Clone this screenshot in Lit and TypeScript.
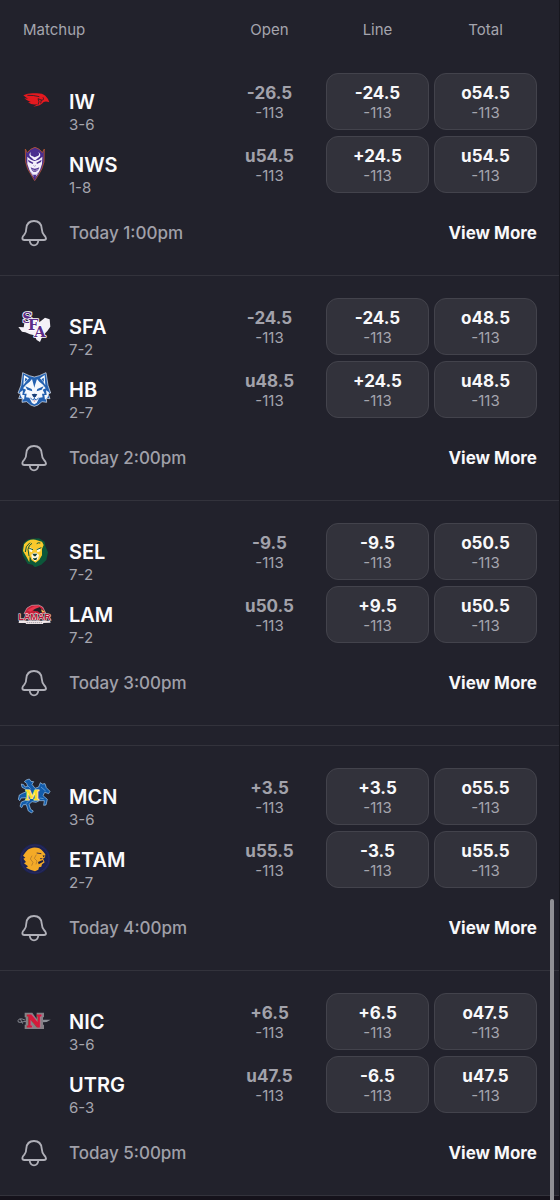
import { LitElement, html, svg, css, type TemplateResult } from "lit";
import { customElement, property } from "lit/decorators.js";

interface Quote {
  value: string;
  price: string;
}

interface Team {
  code: string;
  record: string;
  open: Quote;
  line: Quote;
  total: Quote;
}

interface Game {
  time: string;
  teams: Team[];
}

const team = (code: string, record: string, open: string, line: string, total: string): Team => ({
  code,
  record,
  open: { value: open, price: "-113" },
  line: { value: line, price: "-113" },
  total: { value: total, price: "-113" },
});

const SECTIONS: Game[][] = [
  [
    {
      time: "Today 1:00pm",
      teams: [
        team("IW", "3-6", "-26.5", "-24.5", "o54.5"),
        team("NWS", "1-8", "u54.5", "+24.5", "u54.5"),
      ],
    },
    {
      time: "Today 2:00pm",
      teams: [
        team("SFA", "7-2", "-24.5", "-24.5", "o48.5"),
        team("HB", "2-7", "u48.5", "+24.5", "u48.5"),
      ],
    },
    {
      time: "Today 3:00pm",
      teams: [
        team("SEL", "7-2", "-9.5", "-9.5", "o50.5"),
        team("LAM", "7-2", "u50.5", "+9.5", "u50.5"),
      ],
    },
  ],
  [
    {
      time: "Today 4:00pm",
      teams: [
        team("MCN", "3-6", "+3.5", "+3.5", "o55.5"),
        team("ETAM", "2-7", "u55.5", "-3.5", "u55.5"),
      ],
    },
    {
      time: "Today 5:00pm",
      teams: [
        team("NIC", "3-6", "+6.5", "+6.5", "o47.5"),
        team("UTRG", "6-3", "u47.5", "-6.5", "u47.5"),
      ],
    },
  ],
];

const LOGOS: Record<string, { box: string; art: TemplateResult }> = {
  // Cardinal head
  IW: {
    box: "18 9 108 108",
    art: svg`
      <path fill="#e5191f" d="M40 46 Q54 39 72 40 Q96 38 106 47 Q114 54 118 67 Q108 62 101 66 Q92 78 70 80 Q80 76 82 72 Q68 77 54 67 L62 66 Q50 62 43 55 L54 56 Q46 52 40 46Z"/>
      <path fill="none" stroke="#22222c" stroke-width="2.5" d="M52 46 Q70 45 88 50 M84 74 Q90 66 84 56 L94 60 Q104 61 99 52 M94 60 L92 70"/>`,
  },
  // Demon face
  NWS: {
    box: "18 198 108 108",
    art: svg`
      <path fill="#4a2d8f" stroke="#b4552f" stroke-width="2.5" d="M46 207 L52 218 Q60 206 75 202 Q90 206 97 218 L103 207 L102 246 Q97 268 87 282 L74 302 L62 282 Q51 268 47 246Z"/>
      <path fill="#f3effa" d="M52 230 L63 239 L73 243 L86 239 L97 230 L96 252 Q91 272 82 284 L74 294 L66 284 Q57 270 52 252Z"/>
      <path fill="#f3effa" d="M63 216 Q52 226 65 233 L72 240 L77 240 L85 233 Q97 226 85 216 Q91 226 81 229 L74 232 L68 229 Q58 226 63 216Z"/>
      <path fill="#4a2d8f" d="M54 239 L70 248 L68 252 L56 246Z M95 239 L79 248 L81 252 L93 246Z M62 262 Q74 270 88 262 Q85 273 78 275 L70 275 Q64 272 62 262Z M69 284 L79 284 L74 302Z"/>
      <path fill="none" stroke="#e9e4f4" stroke-width="3" stroke-dasharray="3 1.5" d="M65 268 Q74 274 84 268"/>
      <path fill="none" stroke="#9382bd" stroke-width="2" d="M70 256 L74 259 L78 256 M62 276 L69 286 M86 276 L79 286"/>`,
  },
  // Letters over a state outline
  SFA: {
    box: "18 9 108 108",
    art: svg`
      <path fill="#f4f2f7" d="M43 55 L55 55 L57 44 L78 46 L84 42 L88 52 L105 38 L119 43 L121 65 L112 78 L98 92 L90 111 L80 105 L73 91 L60 88 L46 82 L36 80 L25 66 L41 67Z"/>
      <text font-family="DejaVu Serif, serif" font-weight="700" font-size="44" fill="#5b2c88" stroke="#fff" stroke-width="5" stroke-linejoin="round" paint-order="stroke"><tspan x="37" y="54">S</tspan><tspan x="54" y="76">F</tspan><tspan x="73" y="95">A</tspan></text>`,
  },
  // Husky face
  HB: {
    box: "18 198 108 108",
    art: svg`
      <path fill="#2361b0" stroke="#e8f0fa" stroke-width="2" stroke-linejoin="round" d="M38 203 L58 212 L73 216 L88 212 L108 203 L114 241 L122 264 L114 266 L120 281 L109 280 L110 292 L96 290 L84 300 L73 304 L62 300 L50 290 L36 292 L37 280 L26 281 L32 266 L24 264 L33 241Z"/>
      <path fill="#f4f8fd" d="M42 210 L57 220 L47 231 L40 241Z M104 210 L90 220 L100 231 L106 241Z M66 222 L71 240 L73 248 L75 240 L81 222 L88 230 L99 239 L107 250 L98 254 L104 266 L96 266 L98 277 L88 278 L80 294 L73 298 L66 294 L58 278 L48 277 L50 266 L42 266 L48 254 L39 250 L48 239 L59 230Z"/>
      <path fill="#2361b0" d="M46 218 L53 223 L44 231Z M101 218 L94 223 L102 231Z M46 244 L65 252 L67 259 L52 254Z M101 244 L82 252 L80 259 L95 254Z"/>
      <path fill="#f4f8fd" d="M30 262 L39 256 L37 270 L44 270 L42 284 L34 277Z M117 262 L108 256 L110 270 L103 270 L105 284 L113 277Z"/>
      <path fill="#173e76" d="M65 268 Q74 264 82 268 L77 276 L70 276Z"/>
      <path fill="none" stroke="#2361b0" stroke-width="3" d="M73 276 L73 282 M61 279 Q68 288 73 282 Q79 288 86 279"/>
      <path fill="#d9a3ad" d="M69 286 L78 286 L73 292Z"/>`,
  },
  // Lion with a green mane
  SEL: {
    box: "18 9 108 108",
    art: svg`
      <path fill="#0c573a" d="M41 39 L52 29 L65 26 L87 25 L104 35 L106 48 L114 67 L109 90 L94 104 L75 112 L67 104 L53 101 L46 90 L38 76 L36 60Z"/>
      <path fill="#fac92c" d="M42 43 Q55 26 76 29 L96 35 L101 45 L96 57 L96 76 L88 89 L77 98 L65 91 L59 77 L58 97 L50 82 L46 75 L39 63Z"/>
      <path fill="#fff8dc" d="M60 52 L68 57 L66 67 L58 64Z M80 57 L91 53 L91 64 L82 67Z M64 74 L71 68 L80 68 L87 75 L84 88 L75 94 L66 86Z"/>
      <path fill="none" stroke="#0c573a" stroke-width="3" d="M60 38 L49 50 L46 66 M66 40 Q56 45 54 58 L57 78 M58 55 L69 59 M80 59 L94 53 M91 39 Q84 37 80 41"/>
      <path fill="#123e32" d="M67 71 L82 71 L77 79 L72 79Z M68 83 Q75 87 82 82 L79 90 L72 90Z"/>`,
  },
  // Cardinal over the school name
  LAM: {
    box: "18 198 108 108",
    art: svg`
      <path fill="#c81f39" stroke="#eedde2" stroke-width="1.5" d="M42 251 L51 234 L65 226 L86 225 L98 231 L107 249 L89 254 L76 249 L66 255Z"/>
      <path fill="#222027" d="M64 238 L88 231 L101 242 L92 251 L83 244 L73 243Z"/>
      <path fill="#e7364d" d="M51 241 L73 229 L94 229 L76 236 L61 245Z"/>
      <path fill="#f2c45b" d="M93 238 L107 247 L96 247Z"/>
      <text x="25" y="271" font-family="Liberation Sans, sans-serif" font-weight="700" font-size="27" fill="#b91533" stroke="#f2e7ea" stroke-width="3" paint-order="stroke">LAMAR</text>
      <path fill="#f1e8ea" d="M27 272 L120 272 L122 278 L100 279 L99 282 L48 282 L47 279 L26 279Z"/>
      <path stroke="#7d7881" stroke-width="2" stroke-dasharray="4 2" d="M50 278 H98"/>`,
  },
  // Cowboy on a horse behind an M
  MCN: {
    box: "18 24 108 108",
    art: svg`
      <path fill="#125cab" stroke="#a8cbed" stroke-width="2" stroke-linejoin="round" d="M49 30 L58 27 L63 34 L71 35 L66 43 L75 55 L86 51 L91 38 L97 42 L105 41 L109 53 L120 64 L116 71 L104 67 L99 77 L112 88 L108 105 L101 106 L103 92 L88 92 L78 97 L66 95 L57 103 L62 118 L70 123 L65 129 L55 123 L49 104 L40 104 L35 113 L30 109 L34 96 L47 91 L49 83 L33 84 L29 92 L25 88 L28 75 L39 69 L48 66 L48 58 L36 52 L34 42 L41 44 L45 51 L53 49 L50 40 L43 35Z"/>
      <path fill="none" stroke="#79b2e4" stroke-width="2" d="M54 48 L62 56 M93 51 L107 63 M89 84 L101 86 M55 94 L48 101"/>
      <text x="46" y="91" font-family="DejaVu Serif, serif" font-weight="700" font-size="38" fill="#ffdc28" stroke="#fff2a0" stroke-width="3" paint-order="stroke">M</text>`,
  },
  // Lion profile on a navy disc
  ETAM: {
    box: "18 213 108 108",
    art: svg`
      <circle cx="75" cy="267" r="46" fill="#1c2254"/>
      <circle cx="75" cy="267" r="42" fill="none" stroke="#30315e" stroke-width="2"/>
      <path fill="#f4aa27" d="M45 249 Q52 236 68 233 Q88 231 98 243 L106 253 L105 262 L99 266 L104 277 L96 283 L94 290 L87 292 L85 299 L75 304 L61 299 L48 293 L54 289 L42 280 L48 276 L40 266 L46 263 L39 257Z"/>
      <path fill="none" stroke="#a8702c" stroke-width="2" d="M79 254 L73 265 L81 273 L78 283 M66 257 L61 267 L69 277 L65 287"/>
      <path fill="none" stroke="#4b3540" stroke-width="3" d="M80 249 L94 251 M90 266 L97 266"/>
      <path fill="#202141" d="M98 256 L106 257 L100 262Z M84 276 L98 270 L100 275 L86 283Z"/>`,
  },
  // N crossed by a sword
  NIC: {
    box: "18 9 108 108",
    art: svg`
      <path fill="none" stroke="#858890" stroke-width="3" d="M45 60 Q27 52 24 62 Q23 68 30 67 L48 64 M31 57 L38 71"/>
      <path fill="#8d9097" d="M96 59 L122 59 Q111 68 96 67Z"/>
      <path fill="#858187" d="M44 38 H67 L80 57 V38 H102 V52 H99 V74 H102 V87 H44 V74 H47 V52 H44Z"/>
      <text x="50" y="80" font-family="DejaVu Serif, serif" font-weight="700" font-size="49" fill="#d5193a" stroke="#d5193a" stroke-width="3">N</text>`,
  },
};

const BASE = css`
  *,
  *::before,
  *::after {
    box-sizing: border-box;
  }
  button {
    margin: 0;
    padding: 0;
    border: 0;
    background: none;
    font: inherit;
    color: inherit;
    cursor: pointer;
  }
`;

@customElement("team-logo")
class TeamLogo extends LitElement {
  @property() code = "";

  static styles = css`
    :host {
      display: block;
      width: 36px;
      height: 36px;
    }
    .art {
      display: block;
      width: 100%;
      height: 100%;
    }
  `;

  render() {
    const logo = LOGOS[this.code];
    return logo
      ? html`<svg class="art" viewBox=${logo.box} aria-hidden="true">${logo.art}</svg>`
      : null;
  }
}

@customElement("game-card")
class GameCard extends LitElement {
  @property({ attribute: false }) game!: Game;

  static styles = [
    BASE,
    css`
      :host {
        display: block;
        padding: 22px 22px 0 16px;
        border-bottom: 1px solid #33333c;
      }
      .odds {
        display: grid;
        grid-template-columns: minmax(0, 1fr) repeat(3, 103px);
        column-gap: 5px;
        align-items: start;
      }
      .team {
        display: grid;
        grid-template-columns: 36px 1fr;
        column-gap: 17px;
      }
      .logo {
        margin-top: 10px;
      }
      .name {
        padding-top: 17px;
      }
      .code {
        font-size: 20px;
        font-weight: 600;
        line-height: 24px;
        color: #fbfbfd;
      }
      .record {
        font-size: 15px;
        line-height: 22px;
        color: #a5a5ae;
      }
      .column {
        display: grid;
        row-gap: 6px;
      }
      .quote {
        display: block;
        width: 100%;
        padding: 9px 0 6px;
        border: 1px solid transparent;
        border-radius: 12px;
        text-align: center;
        color: #a2a2ab;
      }
      .pick {
        background: #32323b;
        border-color: #43434c;
      }
      .value {
        display: block;
        font-size: 17px;
        font-weight: 700;
        line-height: 20px;
      }
      .pick .value {
        color: #f8f8fa;
      }
      .price {
        display: block;
        font-size: 15px;
        line-height: 20px;
        color: #a5a5ae;
      }
      .footer {
        display: grid;
        grid-template-columns: 36px 1fr auto;
        column-gap: 17px;
        align-items: center;
        padding-bottom: 8px;
        font-size: 17px;
        font-weight: 500;
        line-height: 68px;
        color: #a0a0a9;
      }
      .alert {
        display: grid;
        place-items: center;
      }
      .bell {
        display: block;
        width: 28px;
        height: 28px;
      }
      .more {
        font-weight: 700;
        color: #f8f8fa;
        text-decoration: none;
      }
    `,
  ];

  private quote(q: Quote) {
    return html`<span class="value">${q.value}</span><span class="price">${q.price}</span>`;
  }

  private picks(kind: "line" | "total") {
    return html`<div class="column">
      ${this.game.teams.map(
        (t) => html`<button class="quote pick" type="button">${this.quote(t[kind])}</button>`
      )}
    </div>`;
  }

  render() {
    const { teams, time } = this.game;
    return html`
      <div class="odds">
        <div>
          ${teams.map(
            (t) => html`<div class="team">
              <team-logo class="logo" .code=${t.code}></team-logo>
              <div class="name">
                <div class="code">${t.code}</div>
                <div class="record">${t.record}</div>
              </div>
            </div>`
          )}
        </div>
        <div class="column">
          ${teams.map((t) => html`<div class="quote">${this.quote(t.open)}</div>`)}
        </div>
        ${this.picks("line")} ${this.picks("total")}
      </div>
      <div class="footer">
        <button class="alert" type="button" aria-label="Notify me">
          <svg class="bell" viewBox="31 25 84 84" fill="none" stroke="#b0b0b8" stroke-width="5.5" stroke-linejoin="round" aria-hidden="true">
            <path d="M44 88 Q38 88 38 82 Q38 78 44 72 Q50 65 50 53 Q52 31 73 31 Q94 31 96 53 Q97 66 103 73 Q109 79 109 83 Q109 88 103 88Z" />
            <path d="M60 90 Q62 104 73 104 Q84 104 86 90" />
          </svg>
        </button>
        <span>${time}</span>
        <a class="more" href="#more">View More</a>
      </div>
    `;
  }
}

@customElement("app-root")
class AppRoot extends LitElement {
  static styles = [
    BASE,
    css`
      :host {
        display: block;
        position: relative;
        min-height: 100vh;
        background: #15121b;
        font-family: Inter, "Liberation Sans", sans-serif;
        overflow: hidden;
      }
      .board {
        background: #22222c;
        border-right: 1px solid #17171e;
      }
      .header {
        display: grid;
        grid-template-columns: minmax(0, 1fr) repeat(3, 103px);
        column-gap: 5px;
        padding: 20px 22px 11px 23px;
        font-size: 15px;
        line-height: 20px;
        text-align: center;
        color: #a5a5ae;
      }
      .first {
        text-align: left;
      }
      .section + .section {
        margin-top: 19px;
        border-top: 1px solid #33333c;
      }
      .thumb {
        position: absolute;
        top: 899px;
        right: 6px;
        bottom: 0;
        width: 4px;
        border-radius: 2px 2px 0 0;
        background: #909095;
      }
    `,
  ];

  render() {
    return html`
      <main class="board">
        <div class="header">
          <span class="first">Matchup</span><span>Open</span><span>Line</span><span>Total</span>
        </div>
        ${SECTIONS.map(
          (games) => html`<section class="section">
            ${games.map((g) => html`<game-card .game=${g}></game-card>`)}
          </section>`
        )}
      </main>
      <div class="thumb"></div>
    `;
  }
}
